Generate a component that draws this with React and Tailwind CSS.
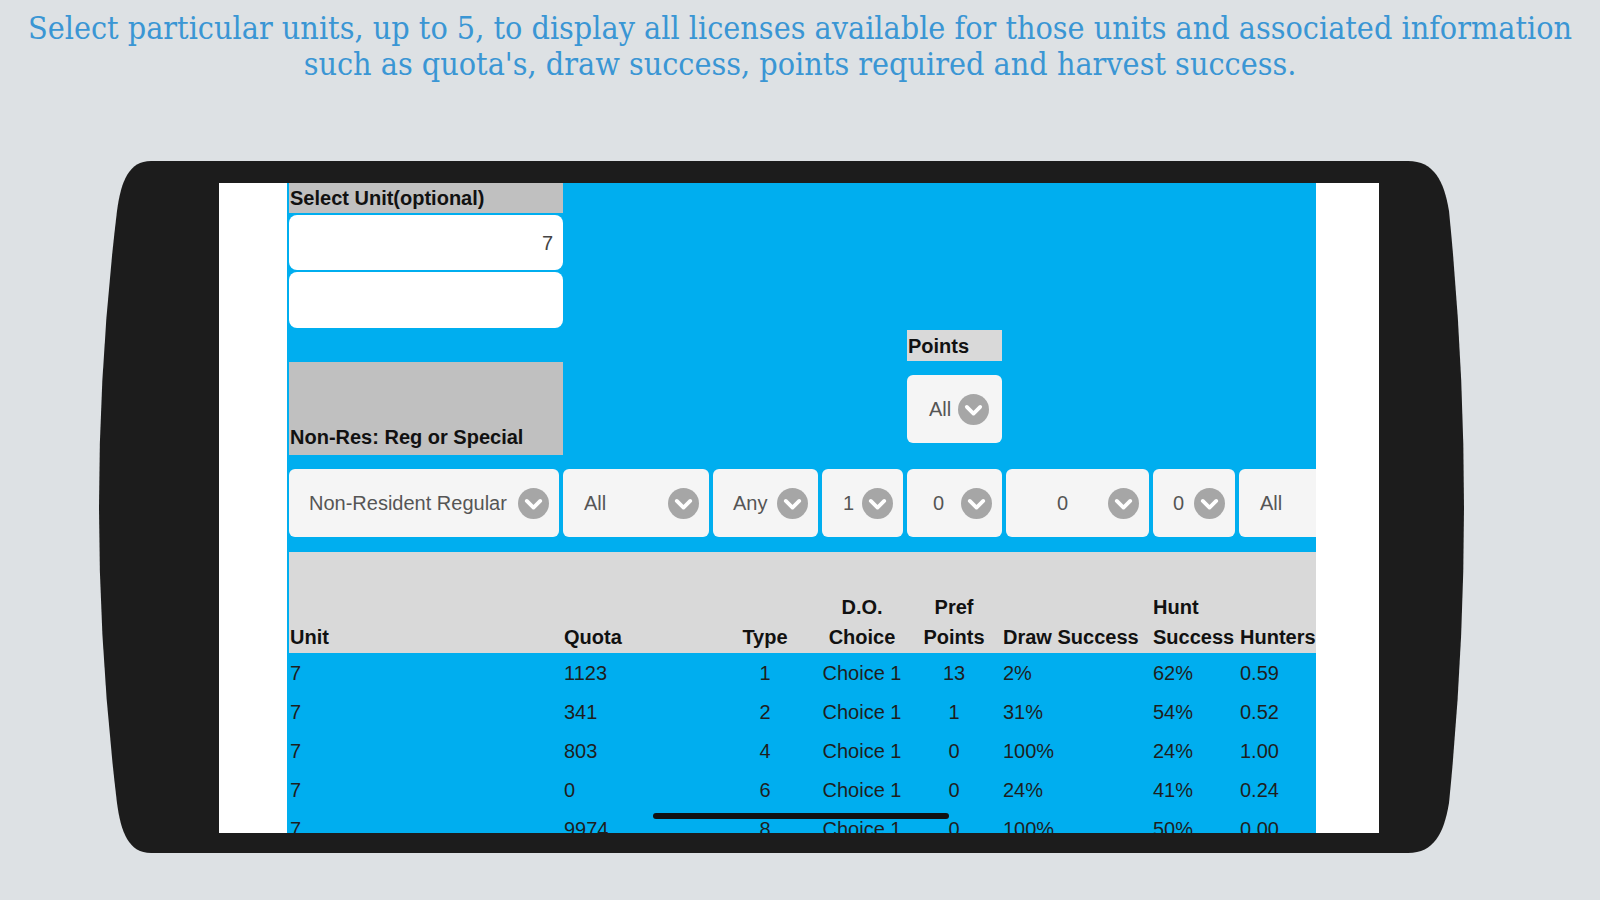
import React from 'react'

const rows = [
  ['7', '1123', '1', 'Choice 1', '13', '2%', '62%', '0.59'],
  ['7', '341', '2', 'Choice 1', '1', '31%', '54%', '0.52'],
  ['7', '803', '4', 'Choice 1', '0', '100%', '24%', '1.00'],
  ['7', '0', '6', 'Choice 1', '0', '24%', '41%', '0.24'],
  ['7', '9974', '8', 'Choice 1', '0', '100%', '50%', '0.00'],
]

function Chevron() {
  return (
    <svg width="31" height="31" viewBox="0 0 30 30" className="shrink-0">
      <circle cx="15" cy="15" r="15" fill="#a6a6a6" />
      <polyline points="8.5,12.5 15,19 21.5,12.5" fill="none" stroke="#fff" strokeWidth="3.6" strokeLinecap="round" strokeLinejoin="round" />
    </svg>
  )
}

function Select({ label, width, pl = 'pl-[20px]', chevron = true }) {
  return (
    <div className={`${width} h-full shrink-0 flex items-center justify-between bg-[#f5f5f5] rounded-[6px] ${pl} pr-[10px] text-[20px] text-[#555]`}>
      <span className="whitespace-nowrap">{label}</span>
      {chevron && <Chevron />}
    </div>
  )
}

// column widths so that texts land at the same x as in the app
const cols = 'grid grid-cols-[273px_165px_76px_118px_66px_164px_87px_1fr]'

export default function App() {
  return (
    <div className="min-h-screen w-full bg-[#dde1e4] overflow-hidden" style={{ fontFamily: '"Liberation Sans", Arial, sans-serif' }}>
      {/* Heading */}
      <div
        className="pt-[10px] text-center text-[#3a96d4] text-[32px] leading-[36px]"
        style={{ fontFamily: '"DejaVu Serif Condensed", "DejaVu Serif", serif', fontStretch: 'condensed' }}
      >
        <p className="whitespace-nowrap">Select particular units, up to 5, to display all licenses available for those units and associated information</p>
        <p>such as quota's, draw success, points required and harvest success.</p>
      </div>

      {/* Phone */}
      <div className="relative ml-[99px] mt-[79px] w-[1365px] h-[692px] pl-[120px] pr-[85px] pt-[22px] pb-[20px]">
        <svg className="absolute inset-0 w-full h-full" viewBox="0 0 1365 692" preserveAspectRatio="none">
          <path
            d="M52,0 L1309,0 C1335,0 1345,20 1350,50 Q1365,200 1365,346 Q1365,492 1350,642 C1345,672 1335,692 1309,692 L52,692 C30,692 22,672 18,642 Q0,492 0,346 Q0,200 18,50 C22,20 30,0 52,0 Z"
            fill="#1c1c1c"
          />
        </svg>

        {/* Screen */}
        <div className="relative h-full w-full bg-white flex overflow-hidden">
          <div className="w-[68px] shrink-0" />
          <div className="w-[1029px] shrink-0 bg-[#00aeef] flex flex-col">
            {/* top section */}
            <div className="h-[286px] shrink-0 flex items-start pl-[2px]">
              <div className="w-[274px] flex flex-col">
                <div className="h-[30px] bg-[#c0c0c0] flex items-center text-[20px] font-bold text-[#111] pl-[1px]">
                  Select Unit(optional)
                </div>
                <div className="mt-[2px] h-[55px] bg-white rounded-[8px] flex items-center justify-end pr-[10px] text-[20px] text-[#444]">
                  7
                </div>
                <div className="mt-[2px] h-[56px] bg-white rounded-[8px]" />
                <div className="mt-[34px] h-[93px] bg-[#c0c0c0] flex items-end pb-[3px] pl-[1px] text-[20px] font-bold text-[#111]">
                  Non-Res: Reg or Special
                </div>
              </div>
              <div className="ml-[344px] mt-[147px] w-[95px] flex flex-col">
                <div className="h-[31px] bg-[#d9d9d9] flex items-center pl-[1px] text-[20px] font-bold text-[#111]">
                  Points
                </div>
                <div className="mt-[14px] h-[68px] bg-[#f5f5f5] rounded-[6px] flex items-center justify-between pl-[22px] pr-[13px] text-[20px] text-[#555]">
                  <span>All</span>
                  <Chevron />
                </div>
              </div>
            </div>

            {/* filter row */}
            <div className="h-[68px] shrink-0 flex gap-[4px] pl-[2px] overflow-hidden">
              <Select label="Non-Resident Regular" width="w-[270px]" />
              <Select label="All" width="w-[146px]" pl="pl-[21px]" />
              <Select label="Any" width="w-[105px]" />
              <Select label="1" width="w-[81px]" pl="pl-[21px]" />
              <Select label="0" width="w-[95px]" pl="pl-[26px]" />
              <Select label="0" width="w-[143px]" pl="pl-[51px]" />
              <Select label="0" width="w-[82px]" pl="pl-[20px]" />
              <div className="flex-1 h-full bg-[#f5f5f5] rounded-l-[6px] flex items-center pl-[21px] text-[20px] text-[#555]">All</div>
            </div>

            {/* table header */}
            <div className={`${cols} mt-[15px] h-[101px] shrink-0 bg-[#d9d9d9] items-end text-[20px] font-bold text-[#111] leading-[30px] ml-[2px] pb-[1px]`}>
              <div className="pl-[1px]">Unit</div>
              <div className="pl-[2px]">Quota</div>
              <div className="text-center">Type</div>
              <div className="text-center">D.O.<br />Choice</div>
              <div className="text-center whitespace-nowrap">Pref<br />Points</div>
              <div className="pl-[16px] whitespace-nowrap">Draw Success</div>
              <div className="pl-[2px]">Hunt<br />Success</div>
              <div className="pl-[2px]">Hunters</div>
            </div>

            {/* rows */}
            {rows.map((r, i) => (
              <div key={i} className={`${cols} h-[39px] shrink-0 items-center text-[20px] text-[#1e1e1e] ml-[2px]`}>
                <div className="pl-[1px]">{r[0]}</div>
                <div className="pl-[2px]">{r[1]}</div>
                <div className="text-center">{r[2]}</div>
                <div className="text-center">{r[3]}</div>
                <div className="text-center">{r[4]}</div>
                <div className="pl-[16px]">{r[5]}</div>
                <div className="pl-[2px]">{r[6]}</div>
                <div className="pl-[2px]">{r[7]}</div>
              </div>
            ))}
          </div>
          <div className="flex-1" />

          {/* home indicator */}
          <div className="absolute left-[434px] top-[630px] w-[296px] h-[6px] rounded-full bg-[#111]" />
        </div>
      </div>
    </div>
  )
}
